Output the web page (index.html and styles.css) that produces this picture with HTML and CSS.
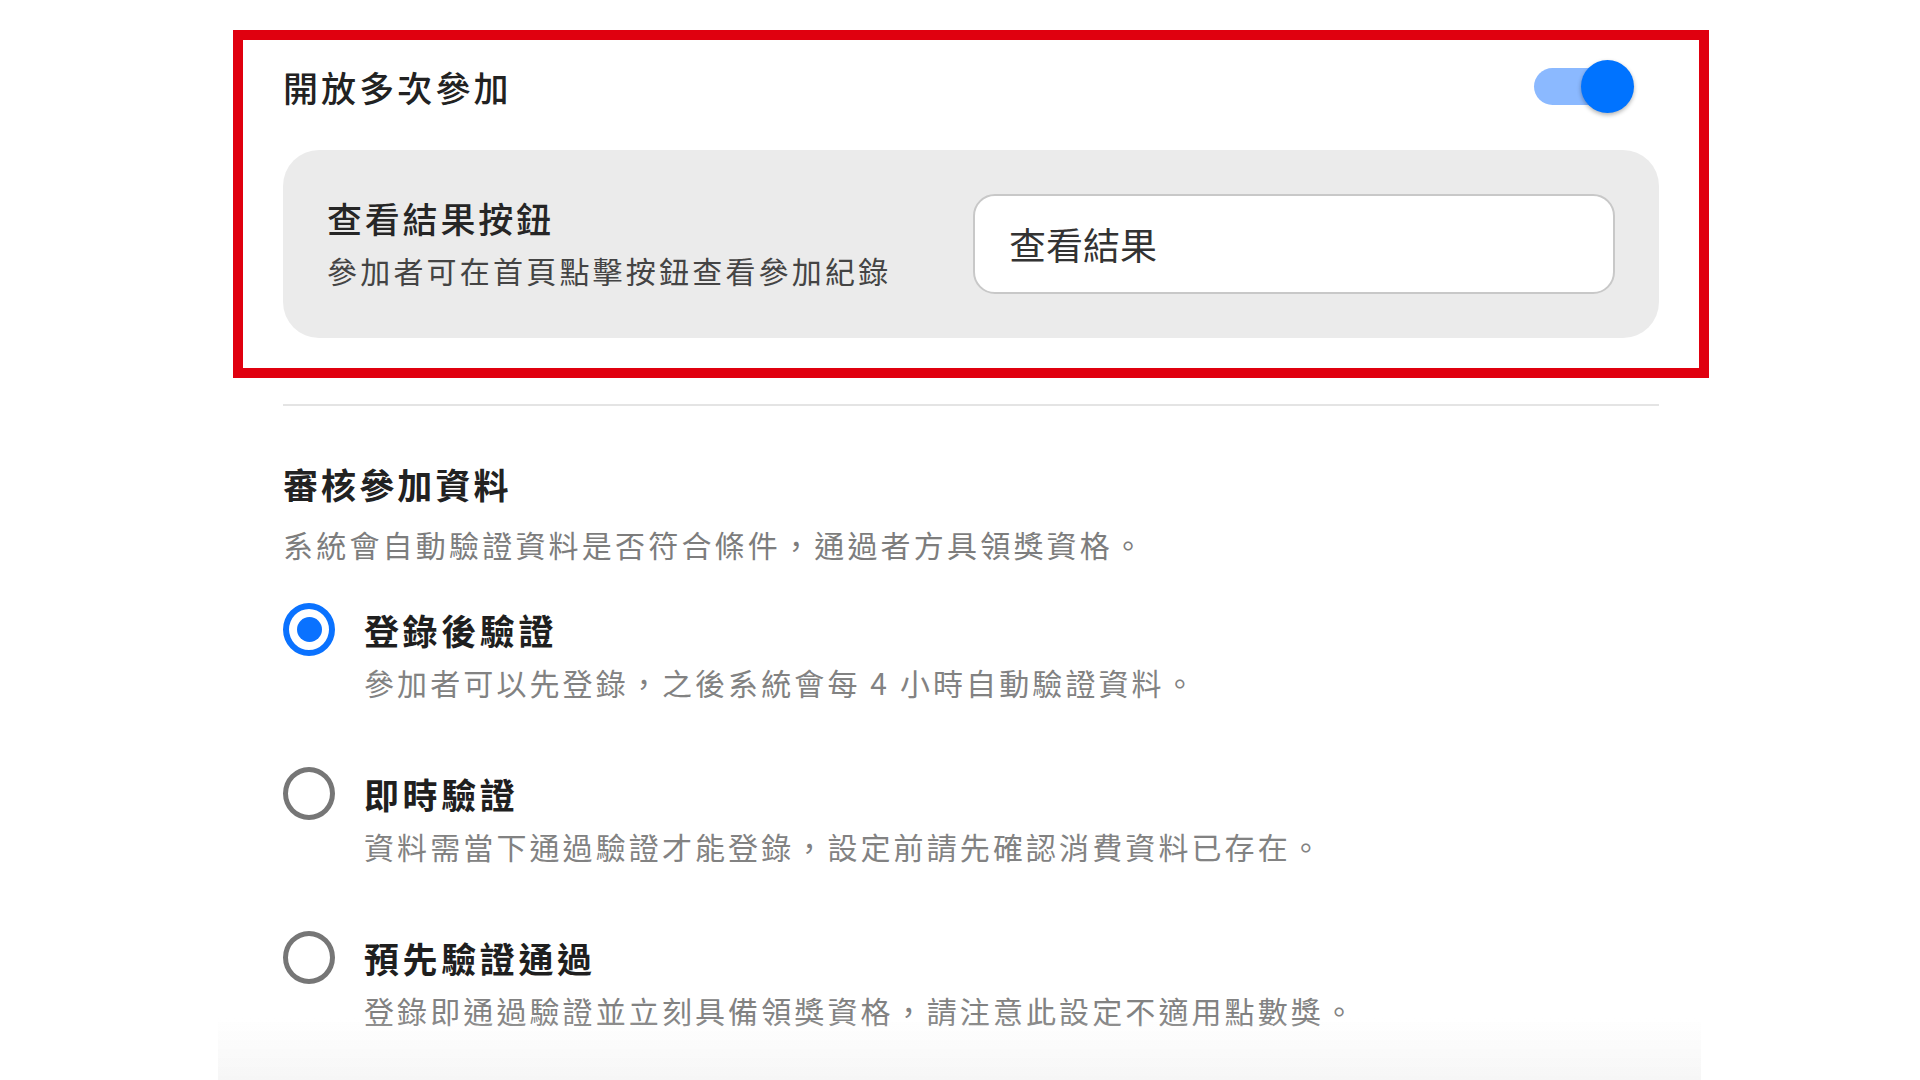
FILE: index.html
```
<!DOCTYPE html>
<html lang="zh-Hant">
<head>
    <meta charset="UTF-8">
    <meta name="viewport" content="width=device-width, initial-scale=1.0">
    <title>參加設定</title>
    <link rel="stylesheet" href="styles.css">
</head>
<body>
    <div class="page">
        <div class="highlight">
            <div class="setting-row">
                <span class="setting-title">開放多次參加</span>
                <div class="toggle on">
                    <span class="toggle-track"></span>
                    <span class="toggle-knob"></span>
                </div>
            </div>

            <div class="result-card">
                <div class="result-info">
                    <div class="result-title">查看結果按鈕</div>
                    <div class="result-desc">參加者可在首頁點擊按鈕查看參加紀錄</div>
                </div>
                <input type="text" class="result-input" value="查看結果">
            </div>
        </div>

        <hr class="divider">

        <h2 class="section-title">審核參加資料</h2>
        <p class="section-desc">系統會自動驗證資料是否符合條件，通過者方具領獎資格。</p>

        <div class="radio-list">
            <label class="radio-item">
                <span class="radio checked"></span>
                <span class="radio-label">登錄後驗證</span>
                <span class="radio-desc">參加者可以先登錄，之後系統會每 4 小時自動驗證資料。</span>
            </label>
            <label class="radio-item">
                <span class="radio"></span>
                <span class="radio-label">即時驗證</span>
                <span class="radio-desc">資料需當下通過驗證才能登錄，設定前請先確認消費資料已存在。</span>
            </label>
            <label class="radio-item">
                <span class="radio"></span>
                <span class="radio-label">預先驗證通過</span>
                <span class="radio-desc">登錄即通過驗證並立刻具備領獎資格，請注意此設定不適用點數獎。</span>
            </label>
        </div>
    </div>

    <div class="bottom-fade"></div>
</body>
</html>
```

FILE: styles.css
```
body {
    font-family: "Noto Sans CJK TC", "Noto Sans", sans-serif;
    background-color: #fff;
    color: #222;
    margin: 0;
    overflow: hidden;
}
.page {
    width: 1376px;
    margin: 0 0 0 283px;
    padding-top: 30px;
}
.highlight {
    margin: 0 -50px;
    border: 10px solid #e0000f;
    padding: 20px 40px 30px;
}
.setting-row {
    display: flex;
    align-items: center;
    justify-content: space-between;
    height: 54px;
}
.setting-title {
    font-size: 35px;
    line-height: 40px;
    letter-spacing: 3.1px;
    font-weight: 500;
    color: #222;
}
.toggle {
    position: relative;
    width: 100px;
    height: 54px;
    margin-right: 25px;
}
.toggle-track {
    position: absolute;
    left: 0;
    top: 8px;
    width: 86px;
    height: 37px;
    border-radius: 19px;
    background-color: #8bb9ff;
}
.toggle-knob {
    position: absolute;
    right: 0;
    top: 0;
    width: 53px;
    height: 53px;
    border-radius: 50%;
    background-color: #0073ff;
    box-shadow: 0 2px 4px rgba(0, 0, 0, 0.3);
}
.result-card {
    margin-top: 36px;
    background-color: #ebebeb;
    border-radius: 36px;
    padding: 44px;
    display: flex;
    align-items: center;
}
.result-info {
    flex: 1;
}
.result-title {
    font-size: 35px;
    line-height: 40px;
    letter-spacing: 2.8px;
    font-weight: 500;
    color: #262626;
}
.result-desc {
    margin-top: 12px;
    font-size: 30px;
    line-height: 40px;
    letter-spacing: 3.2px;
    color: #444;
}
.result-input {
    width: 642px;
    height: 100px;
    box-sizing: border-box;
    border: 2px solid #c8c8c8;
    border-radius: 22px;
    background-color: #fff;
    padding: 0 34px;
    font-family: inherit;
    font-size: 37px;
    color: #333;
    outline: none;
}
.divider {
    margin: 26px 0 0;
    border: none;
    height: 2px;
    background-color: #e4e4e4;
}
.section-title {
    margin: 58px 0 0;
    font-size: 35px;
    line-height: 40px;
    letter-spacing: 3.1px;
    font-weight: 700;
    color: #222;
}
.section-desc {
    margin: 20px 0 0;
    font-size: 30px;
    line-height: 40px;
    letter-spacing: 3.2px;
    color: #7d7d7d;
}
.radio-list {
    margin-top: 39px;
    display: flex;
    flex-direction: column;
    gap: 65px;
}
.radio-item {
    display: grid;
    grid-template-columns: 52px 1fr;
    grid-template-rows: 53px auto;
    column-gap: 29px;
    cursor: pointer;
}
.radio {
    width: 52px;
    height: 53px;
    box-sizing: border-box;
    border: 5px solid #767676;
    border-radius: 50%;
    display: flex;
    align-items: center;
    justify-content: center;
}
.radio.checked {
    border: 6px solid #0a72ff;
}
.radio.checked::after {
    content: "";
    width: 25px;
    height: 25px;
    border-radius: 50%;
    background-color: #0a72ff;
}
.radio-label {
    align-self: center;
    font-size: 35px;
    line-height: 40px;
    letter-spacing: 3.6px;
    font-weight: 700;
    color: #1f1f1f;
}
.radio-desc {
    grid-column: 2;
    margin-top: 6px;
    font-size: 30px;
    line-height: 40px;
    letter-spacing: 3.1px;
    color: #828282;
}
.bottom-fade {
    position: fixed;
    left: 218px;
    bottom: 0;
    width: 1483px;
    height: 62px;
    background: linear-gradient(rgba(245, 245, 245, 0), #f6f6f6);
}
```
